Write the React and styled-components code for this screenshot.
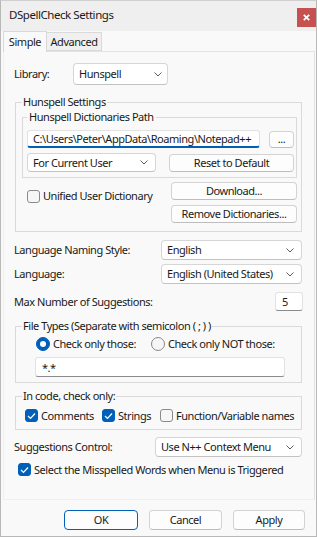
import React from 'react';
import styled, { createGlobalStyle } from 'styled-components';

const Global = createGlobalStyle`
  html, body { margin: 0; padding: 0; background: #f9f9f9; }
  body {
    font-family: "Noto Sans", "Open Sans", sans-serif;
    font-size: 11px;
    letter-spacing: -0.45px;
    color: #1a1a1a;
  }
  * { box-sizing: border-box; }
`;

const Window = styled.div`
  width: 317px;
  height: 537px;
  border: 1px solid #b8b8b8;
  border-top-color: #cfcfcf;
  background: #f9f9f9;
  display: flex;
  flex-direction: column;
`;

const TitleBar = styled.div`
  height: 30px;
  flex: none;
  background: #efefef;
  display: flex;
  justify-content: space-between;
  align-items: flex-start;
  padding-left: 8px;
`;

const Title = styled.div`
  margin-top: 6px;
  font-size: 11.5px;
  line-height: 16px;
  color: #1a1a1a;
`;

const CloseButton = styled.div`
  margin-top: 7px;
  width: 19px;
  height: 19px;
  background: #c75050;
  display: flex;
  align-items: center;
  justify-content: center;
`;

const TabStrip = styled.div`
  height: 21px;
  flex: none;
  display: flex;
  align-items: flex-end;
  padding-left: 2px;
`;

const Tab = styled.div`
  position: relative;
  z-index: ${p => (p.$active ? 1 : 0)};
  height: ${p => (p.$active ? 21 : 19)}px;
  width: ${p => p.$w}px;
  margin-left: ${p => (p.$active ? 0 : -1)}px;
  margin-bottom: ${p => (p.$active ? 0 : 1)}px;
  background: ${p => (p.$active ? '#f9f9f9' : '#f0f0f0')};
  border: 1px solid #d9d9d9;
  border-bottom: ${p => (p.$active ? 'none' : '1px solid #d9d9d9')};
  display: flex;
  align-items: center;
  justify-content: center;
  line-height: 14px;
  padding-bottom: ${p => (p.$active ? 1 : 0)}px;
`;

const Panel = styled.div`
  flex: 1;
  margin: -1px 1px 0 2px;
  border: 1px solid #e3e3e3;
  border-left-color: #efefef;
  border-bottom-color: #efefef;
  padding: 0 11px 0 10px;
  display: flex;
  flex-direction: column;
`;

const Row = styled.div`
  display: flex;
  align-items: center;
  justify-content: ${p => (p.$start ? 'flex-start' : 'space-between')};
  margin-top: ${p => p.$mt || 0}px;
  margin-left: ${p => p.$ml || 0}px;
  padding-right: ${p => p.$pr || 0}px;
  height: ${p => p.$h || 20}px;
  gap: ${p => p.$gap || 0}px;
`;

const Label = styled.span`
  white-space: nowrap;
  width: ${p => (p.$w ? `${p.$w}px` : 'auto')};
  line-height: 14px;
`;

const ComboBox = styled.div`
  width: ${p => p.$w}px;
  height: ${p => p.$h || 20}px;
  flex: none;
  display: flex;
  align-items: center;
  justify-content: space-between;
  padding: 0 ${p => p.$pr || 7}px 0 5px;
  background: #ffffff;
  border: 1px solid #d6d6d6;
  border-bottom-color: #c2c2c2;
  border-radius: 4px;
  white-space: nowrap;
  line-height: 14px;
`;

const Field = styled.input`
  width: ${p => p.$w}px;
  height: ${p => p.$h || 20}px;
  flex: none;
  font: inherit;
  font-size: 11px;
  letter-spacing: -0.45px;
  color: #1a1a1a;
  background: #ffffff;
  border: 1px solid #e2e2e2;
  border-bottom: ${p => (p.$focus ? '2px solid #005fb8' : '1px solid #8b8b8b')};
  border-radius: 3px;
  padding: 0 0 0 ${p => p.$pl || 5}px;
  margin: 0;
  outline: none;
`;

const Button = styled.button`
  width: ${p => (p.$w ? `${p.$w}px` : '100%')};
  height: ${p => p.$h || 18}px;
  flex: none;
  font: inherit;
  font-size: 11px;
  letter-spacing: -0.45px;
  color: #1a1a1a;
  background: #fdfdfd;
  border: 1px solid ${p => (p.$default ? '#005fb8' : '#d3d3d3')};
  border-bottom-color: ${p => (p.$default ? '#005fb8' : '#bdbdbd')};
  border-radius: 4px;
  padding: 0;
  margin: 0;
  line-height: 14px;
`;

const Group = styled.fieldset`
  margin: ${p => p.$mt || 0}px 0 0 ${p => (p.$inner ? 0 : 1)}px;
  padding: ${p => p.$pt || 0}px ${p => p.$pr || 0}px ${p => p.$pb || 0}px ${p => p.$pl || 6}px;
  border: 1px solid #dadada;
  min-width: 0;
  width: ${p => p.$w}px;
`;

const Legend = styled.legend`
  padding: 0 ${p => p.$px || 1}px;
  line-height: 14px;
  font-size: 11px;
  white-space: nowrap;
`;

const CheckItem = styled.label`
  display: flex;
  align-items: center;
  gap: 3px;
  white-space: nowrap;
  line-height: 14px;
  width: ${p => (p.$w ? `${p.$w}px` : 'auto')};
  flex: none;
`;

const Box = styled.span`
  width: 13px;
  height: 13px;
  flex: none;
  border-radius: 3px;
  background: ${p => (p.$on ? '#005fb8' : '#f6f6f6')};
  border: 1px solid ${p => (p.$on ? '#005fb8' : '#8a8a8a')};
  display: flex;
  align-items: center;
  justify-content: center;
`;

const RadioDot = styled.span`
  width: 14px;
  height: 14px;
  flex: none;
  border-radius: 50%;
  background: ${p => (p.$on ? '#005fb8' : '#f6f6f6')};
  border: 1px solid ${p => (p.$on ? '#005fb8' : '#8a8a8a')};
  display: flex;
  align-items: center;
  justify-content: center;
  &::after {
    content: '';
    display: ${p => (p.$on ? 'block' : 'none')};
    width: 6px;
    height: 6px;
    border-radius: 50%;
    background: #ffffff;
  }
`;

const SplitArea = styled.div`
  display: grid;
  grid-template-columns: 1fr 126px;
  margin-top: 4px;
`;

const ButtonStack = styled.div`
  display: flex;
  flex-direction: column;
  gap: 5px;
`;

const Footer = styled.div`
  height: 36px;
  flex: none;
  display: flex;
  justify-content: flex-end;
  align-items: flex-start;
  gap: 11px;
  padding: 10px 11px 0 0;
`;

const Chevron = () => (
  <svg width="8" height="5" viewBox="0 0 8 5">
    <polyline points="0.5,0.5 4,4 7.5,0.5" fill="none" stroke="#5f5f5f" strokeWidth="1" />
  </svg>
);

const Combo = ({ w, h, pr, children }) => (
  <ComboBox $w={w} $h={h} $pr={pr}>
    <span>{children}</span>
    <Chevron />
  </ComboBox>
);

const CheckMark = () => (
  <svg width="9" height="8" viewBox="0 0 9 8">
    <polyline points="1,4 3.5,6.5 8,1.5" fill="none" stroke="#ffffff" strokeWidth="1.2" />
  </svg>
);

const Check = ({ on, w, children }) => (
  <CheckItem $w={w}>
    <Box $on={on}>{on && <CheckMark />}</Box>
    <span>{children}</span>
  </CheckItem>
);

const Radio = ({ on, w, children }) => (
  <CheckItem $w={w}>
    <RadioDot $on={on} />
    <span>{children}</span>
  </CheckItem>
);

export default function App() {
  return (
    <>
      <Global />
      <Window>
        <TitleBar>
          <Title>DSpellCheck Settings</Title>
          <CloseButton>
            <svg width="7" height="7" viewBox="0 0 7 7">
              <path d="M0.8 0.8 L6.2 6.2 M6.2 0.8 L0.8 6.2" stroke="#ffffff" strokeWidth="1.7" />
            </svg>
          </CloseButton>
        </TitleBar>

        <TabStrip>
          <Tab $active $w={44}>Simple</Tab>
          <Tab $w={56}>Advanced</Tab>
        </TabStrip>

        <Panel>
          <Row $start $mt={11} $h={22}>
            <Label $w={59}>Library:</Label>
            <Combo w={95} h={22} pr={5}>Hunspell</Combo>
          </Row>

          <Group $mt={10} $w={287} $pt={1} $pr={4} $pb={8} $pl={6}>
            <Legend>Hunspell Settings</Legend>
            <Group $inner $w={275} $pt={6} $pr={2} $pb={5} $pl={4}>
              <Legend $px={2}>Hunspell Dictionaries Path</Legend>
              <Row $h={18}>
                <Field $w={233} $h={18} $focus readOnly value={'C:\\Users\\Peter\\AppData\\Roaming\\Notepad++'} />
                <Button $w={25} $h={17}>...</Button>
              </Row>
              <Row $mt={5} $h={19}>
                <Combo w={129} h={19}>For Current User</Combo>
                <Button $w={125} $h={18}>Reset to Default</Button>
              </Row>
            </Group>
            <SplitArea>
              <Row $start $mt={7} $ml={5} $h={14}>
                <Check>Unified User Dictionary</Check>
              </Row>
              <ButtonStack>
                <Button $h={18}>Download...</Button>
                <Button $h={18}>Remove Dictionaries...</Button>
              </ButtonStack>
            </SplitArea>
          </Group>

          <Row $mt={8} $pr={1}>
            <Label>Language Naming Style:</Label>
            <Combo w={141}>English</Combo>
          </Row>
          <Row $mt={4} $pr={1}>
            <Label>Language:</Label>
            <Combo w={141}>English (United States)</Combo>
          </Row>
          <Row $mt={8} $h={19}>
            <Label>Max Number of Suggestions:</Label>
            <Field $w={28} $h={19} $pl={6} readOnly value="5" />
          </Row>

          <Group $mt={8} $w={287} $pt={0} $pb={5} $pl={6}>
            <Legend>File Types (Separate with semicolon ( ; ) )</Legend>
            <Row $start $mt={4} $ml={14} $h={14}>
              <Radio on w={115}>Check only those:</Radio>
              <Radio>Check only NOT those:</Radio>
            </Row>
            <Row $start $mt={6} $ml={13} $h={20}>
              <Field $w={250} $h={20} $pl={6} readOnly value="*.*" />
            </Row>
          </Group>

          <Group $mt={6} $w={287} $pt={0} $pb={7} $pl={6}>
            <Legend>In code, check only:</Legend>
            <Row $start $mt={6} $ml={3} $h={13}>
              <Check on w={77}>Comments</Check>
              <Check on w={58}>Strings</Check>
              <Check>Function/Variable names</Check>
            </Row>
          </Group>

          <Row $mt={7} $pr={1}>
            <Label>Suggestions Control:</Label>
            <Combo w={147}>Use N++ Context Menu</Combo>
          </Row>
          <Row $start $mt={6} $ml={4} $h={13}>
            <Check on>Select the Misspelled Words when Menu is Triggered</Check>
          </Row>
        </Panel>

        <Footer>
          <Button $w={74} $h={20} $default>OK</Button>
          <Button $w={73} $h={20}>Cancel</Button>
          <Button $w={72} $h={20}>Apply</Button>
        </Footer>
      </Window>
    </>
  );
}
